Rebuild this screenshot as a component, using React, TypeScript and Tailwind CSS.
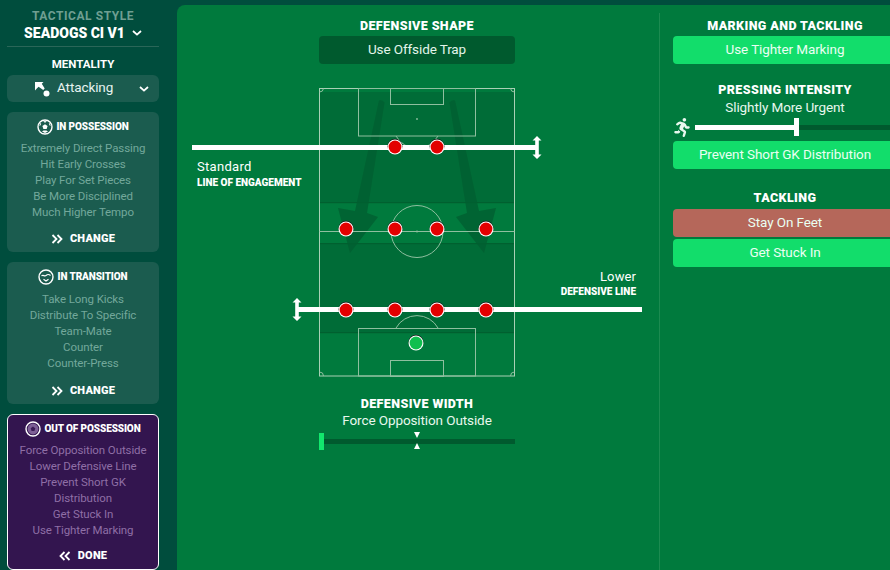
import React from "react";
import { FaRunning } from "react-icons/fa";

const Chevron = ({ className }: { className?: string }) => (
  <svg viewBox="0 0 10 6" className={className} fill="none" stroke="currentColor" strokeWidth="1.8">
    <path d="M1 1l4 3.600L9 1" />
  </svg>
);

const Dbl = ({ left }: { left?: boolean }) => (
  <svg viewBox="0 0 12 10" className="w-[12px] h-[10px]" fill="none" stroke="currentColor" strokeWidth="1.8">
    {left ? <path d="M5.500 1L1.500 5l4 4M10.500 1L6.500 5l4 4" /> : <path d="M1.500 1l4 4-4 4M6.500 1l4 4-4 4" />}
  </svg>
);

const BallIcon = ({ kind }: { kind: "ball" | "trans" | "out" }) => (
  <svg viewBox="0 0 16 16" className="w-[16px] h-[16px] shrink-0">
    <circle cx="8" cy="8" r="7" fill="none" stroke="#fff" strokeWidth="1.4" />
    {kind === "ball" && (
      <g fill="#fff">
        <path d="M8 5.200l2.600 1.900-1 3H6.400l-1-3z" />
        <path d="M6.200 2.600L8 3.700l1.800-1.100L8 2zM3 7l1.200-2.200L3.400 4 2.400 6.500zM13 7l-1.200-2.200.8-.8 1 2.500zM5 12.400l1.600-.8h2.800l1.600.8L8 14z" />
      </g>
    )}
    {kind === "trans" && (
      <g fill="none" stroke="#fff" strokeWidth="1.1">
        <path d="M3.500 7C5 5.200 6.500 7.800 8 6.500S10.500 4.800 12.500 6.500" />
        <path d="M5.500 10.200L8 12l2.500-1.800" />
      </g>
    )}
    {kind === "out" && (
      <g fill="#7d5f95">
        <circle cx="8" cy="8" r="5.400" />
        <path d="M8 5.500l2.300 1.700-.9 2.700H6.600l-.9-2.700z" fill="#3a1a55" />
      </g>
    )}
  </svg>
);

function Card({
  kind,
  title,
  items,
  action,
  purple,
  cls,
  listCls,
}: {
  kind: "ball" | "trans" | "out";
  title: string;
  items: string[];
  action: string;
  purple?: boolean;
  cls: string;
  listCls: string;
}) {
  return (
    <div
      className={`mx-[7px] rounded-[6px] flex flex-col items-center ${cls} ${
        purple ? "bg-[#33154f] border border-white" : "bg-[#1b5c4f]"
      }`}
    >
      <div className={`flex items-center gap-[3px] h-[16px] ${purple ? "mt-[6px]" : "mt-[7px]"}`}>
        <BallIcon kind={kind} />
        <span className="text-[10px] leading-none font-black text-white tracking-[-0.1px]">{title}</span>
      </div>
      <div className={`text-center text-[11.5px] leading-[16px] tracking-[-0.1px] ${listCls} ${purple ? "text-[#8f6fa6]" : "text-[#73a89b]"}`}>
        {items.map((t) => (
          <div key={t}>{t}</div>
        ))}
      </div>
      <div className="mt-auto mb-[7px] flex items-center gap-[7px] text-white text-[11px] leading-[12px] font-black tracking-[0.2px]">
        <Dbl left={purple} />
        <span>{action}</span>
      </div>
    </div>
  );
}

const Btn = ({ children, cls = "bg-[#12dd6b]" }: { children: React.ReactNode; cls?: string }) => (
  <div className={`h-[28px] pb-[2px] rounded-[4px] flex items-center justify-center text-[13.5px] tracking-[-0.1px] text-[#eafff2] ${cls}`}>{children}</div>
);

const H = ({ children, cls = "" }: { children: React.ReactNode; cls?: string }) => (
  <div className={`text-center text-[12.5px] leading-[14px] font-black text-white tracking-[0.4px] ${cls}`}>{children}</div>
);

function Player({ x, y, gk }: { x: number; y: number; gk?: boolean }) {
  return (
    <g>
      <circle cx={x} cy={y - 0.8} r="7.500" fill="#111" />
      <circle cx={x} cy={y} r="7.500" fill="#fff" />
      <circle cx={x} cy={y} r="6.400" fill={gk ? "#0fbf4f" : "#e30000"} />
    </g>
  );
}

const VArrow = ({ x, y }: { x: number; y: number }) => (
  <path
    transform={`translate(${x} ${y})`}
    d="M0-11.500L4.500-7H1.800V7H4.500L0 11.500-4.500 7H-1.800V-7H-4.500z"
    fill="#fff"
  />
);

function Pitch() {
  const line = "#8fbf9f";
  return (
    <svg viewBox="177 70 482 320" className="absolute left-0 top-[65px] w-[482px] h-[320px] overflow-visible">
      <rect x="319.500" y="92" width="195" height="111" fill="#006c37" />
      <rect x="319.500" y="244" width="195" height="89" fill="#006c37" />
      <rect x="319.500" y="202" width="195" height="1.200" fill="#00602f" />
      <rect x="319.500" y="243" width="195" height="1.200" fill="#00602f" />
      <rect x="319.500" y="332" width="195" height="1.200" fill="#00602f" />
      <g fill="#005f31" opacity="0.8">
        <path d="M379 100.500q3-1 5.500 2L367 213 378 217 350 253 338 208 355 211z" />
        <path d="M455 100.500q-3-1-5.500 2L467 213 456 217 484 253 496 208 479 211z" />
      </g>
      <g fill="none" stroke={line} strokeWidth="1">
        <rect x="319.500" y="88.500" width="195" height="287.500" stroke="#a9d0b5" />
        <rect x="358.500" y="88.500" width="117" height="47.500" />
        <rect x="390.500" y="88.500" width="53" height="16" />
        <rect x="358.500" y="328.500" width="117" height="47.500" />
        <rect x="390.500" y="360.500" width="53" height="16" />
        <path d="M319.500 231.500H514.500" />
        <circle cx="417" cy="231.500" r="26" />
        <path d="M396 136a24 24 0 0 0 42 0M396 328a24 24 0 0 1 42 0" />
        <path d="M319.500 92a4 4 0 0 0 4-3.500M514.500 92a4 4 0 0 1-4-3.500M319.500 372a4 4 0 0 1 4 4M514.500 372a4 4 0 0 0-4 4" />
      </g>
      <g fill={line}>
        <circle cx="417" cy="119" r="0.900" />
        <circle cx="417" cy="231.500" r="1" />
      </g>
      <rect x="192" y="145" width="345" height="5" fill="#fff" />
      <VArrow x={537} y={147.500} />
      <rect x="297" y="307" width="345" height="5" fill="#fff" />
      <VArrow x={297} y={309.500} />
      {[395, 437].map((x) => <Player key={x} x={x} y={147} />)}
      {[346, 395, 437, 486].map((x) => <Player key={x} x={x} y={229} />)}
      {[346, 395, 437, 486].map((x) => <Player key={x} x={x} y={310} />)}
      <Player x={416} y={343} gk />
    </svg>
  );
}

export default function App() {
  return (
    <div className="w-[890px] h-[570px] overflow-hidden flex bg-[#004d3d] font-['Roboto',sans-serif]">
      <aside className="w-[177px] shrink-0 flex flex-col">
        <div className="pr-[11px] pt-[10px] text-center">
          <div className="text-[12px] leading-[12px] font-bold text-[#6f9f92] tracking-[0.55px]">TACTICAL STYLE</div>
          <div className="mt-[3px] flex items-center justify-center gap-[7px] text-[14px] leading-[16px] font-black text-white">
            <span>SEADOGS CI V1</span>
            <Chevron className="w-[10px] h-[6px]" />
          </div>
        </div>
        <div className="mx-[7px] mt-[5px] h-px w-[152px] bg-[#2a6658]" />
        <div className="w-[166px] mt-[10px] text-center text-[11.5px] leading-[14px] font-bold text-white">MENTALITY</div>
        <div className="mx-[7px] mt-[4px] w-[152px] h-[27px] rounded-[6px] bg-[#1b5c4f] flex items-center text-white">
          <svg viewBox="0 0 16 16" className="w-[16px] h-[16px] ml-[27px]">
            <path d="M1 1h8.500L7.800 2.800l2.900 4.700-1.500 1.500L4.600 5.800 2.800 7.500 1 9.500z" fill="#fff" />
            <circle cx="12.500" cy="12.500" r="3" fill="#fff" />
          </svg>
          <span className="ml-[7px] mb-[2px] text-[13.5px] tracking-[-0.1px] text-[#e7f3ef]">Attacking</span>
          <Chevron className="w-[10px] h-[6px] ml-auto mr-[10px]" />
        </div>
        <div className="w-[166px] flex flex-col">
          <Card
            kind="ball"
            title="IN POSSESSION"
            cls="mt-[10px] h-[140px]"
            listCls="mt-[5px]"
            action="CHANGE"
            items={["Extremely Direct Passing", "Hit Early Crosses", "Play For Set Pieces", "Be More Disciplined", "Much Higher Tempo"]}
          />
          <Card
            kind="trans"
            title="IN TRANSITION"
            cls="mt-[10px] h-[142px]"
            listCls="mt-[6px]"
            action="CHANGE"
            items={["Take Long Kicks", "Distribute To Specific", "Team-Mate", "Counter", "Counter-Press"]}
          />
          <Card
            kind="out"
            title="OUT OF POSSESSION"
            cls="mt-[10px] h-[156px]"
            listCls="mt-[5px]"
            action="DONE"
            purple
            items={["Force Opposition Outside", "Lower Defensive Line", "Prevent Short GK", "Distribution", "Get Stuck In", "Use Tighter Marking"]}
          />
        </div>
      </aside>
      <main className="mt-[5px] flex-1 rounded-tl-[8px] bg-[#007a3d] flex text-white">
        <section className="relative w-[482px] shrink-0 flex flex-col items-center pr-[2px]">
          <H cls="mt-[14px]">DEFENSIVE SHAPE</H>
          <div className="mt-[3px] w-[196px] h-[28px] pb-[2px] rounded-[4px] bg-[#005a2e] flex items-center justify-center text-[13.5px] tracking-[-0.1px] text-[#e3f5ea]">
            Use Offside Trap
          </div>
          <Pitch />
          <div className="absolute left-[20px] top-[154px]">
            <div className="text-[13px] leading-[16px] tracking-[0.3px]">Standard</div>
            <div className="mt-[2px] text-[10px] leading-[12px] font-black">LINE OF ENGAGEMENT</div>
          </div>
          <div className="absolute right-[23px] top-[264px] text-right">
            <div className="text-[13px] leading-[16px] tracking-[0.1px]">Lower</div>
            <div className="mt-[1px] text-[10px] leading-[12px] font-black">DEFENSIVE LINE</div>
          </div>
          <H cls="mt-[333px]">DEFENSIVE WIDTH</H>
          <div className="mt-px text-[13.5px] leading-[16px] tracking-[-0.1px] text-[#e8f8ee]">Force Opposition Outside</div>
          <div className="relative mt-[4px] w-[196px] h-[18px] flex items-center">
            <div className="w-[5px] h-[17px] bg-[#12e86d]" />
            <div className="flex-1 h-[5px] bg-[#005a2e]" />
            <svg viewBox="0 0 6 18" className="absolute left-[95px] top-0 w-[6px] h-[18px]">
              <path d="M0 0h6L3 6zM0 17h6L3 11z" fill="#fff" />
            </svg>
          </div>
        </section>
        <div className="w-px mt-[8px] bg-[#1c8a50]" />
        <section className="ml-[13px] w-[224px] shrink-0">
          <H cls="mt-[14px]">MARKING AND TACKLING</H>
          <div className="mt-[3px]"><Btn>Use Tighter Marking</Btn></div>
          <H cls="mt-[19px]">PRESSING INTENSITY</H>
          <div className="mt-[2px] text-center text-[13.5px] leading-[16px] tracking-[-0.1px] text-[#e8f8ee]">Slightly More Urgent</div>
          <div className="mt-[3px] h-[18px] flex items-center">
            <FaRunning className="w-[16px] h-[19px] ml-[1px] text-[#e8f8ee]" />
            <div className="ml-[5px] w-[99px] h-[5px] bg-white" />
            <div className="w-[5px] h-[18px] bg-white" />
            <div className="flex-1 h-[5px] bg-[#005a2e]" />
          </div>
          <div className="mt-[5px]"><Btn>Prevent Short GK Distribution</Btn></div>
          <H cls="mt-[22px]">TACKLING</H>
          <div className="mt-[4px]"><Btn cls="bg-[#b5675a]">Stay On Feet</Btn></div>
          <div className="mt-[2px]"><Btn>Get Stuck In</Btn></div>
        </section>
      </main>
    </div>
  );
}
